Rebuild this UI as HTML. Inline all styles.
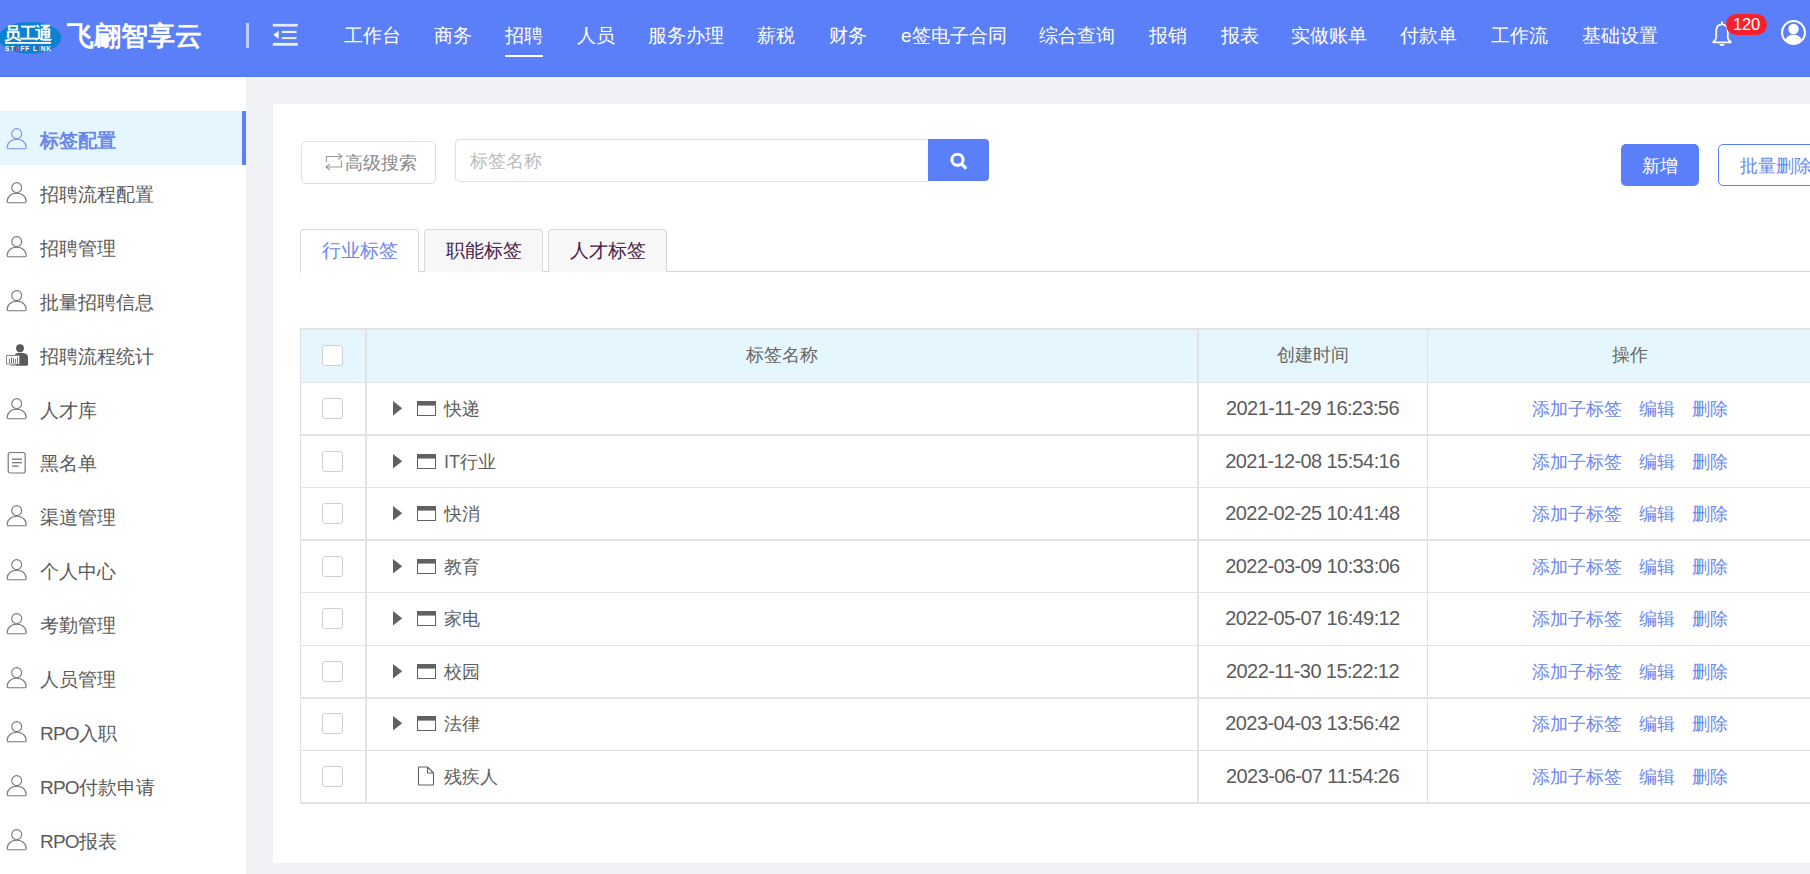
<!DOCTYPE html>
<html><head><meta charset="utf-8">
<style>
*{box-sizing:border-box;margin:0;padding:0}
html,body{width:1810px;height:874px;overflow:hidden;background:#f0f2f5;font-family:"Liberation Sans",sans-serif;}
.abs{position:absolute}
#hdr{position:absolute;left:0;top:0;width:1810px;height:77px;background:#5b7ff8;border-bottom:1px solid #5375f5}
.nav{position:absolute;top:25px;color:#fff;font-size:19px;line-height:22px;white-space:nowrap}
.nav.on:after{content:"";position:absolute;left:0;right:0;top:30px;height:2px;background:#fff}
#side{position:absolute;left:0;top:77px;width:246px;height:797px;background:#fff}
.si{position:absolute;left:0;width:246px;height:54px;color:#5a5a5a;font-size:19px}
.si .t{position:absolute;left:40px;top:19px;line-height:22px;white-space:nowrap}
.si svg{position:absolute;left:6px;top:17px}
.si.on{background:#e6f6fe;color:#6a87ec;font-weight:bold}
.si.on:after{content:"";position:absolute;right:0;top:0;width:4px;height:54px;background:#5b7ff8}
#panel{position:absolute;left:273px;top:104px;width:1537px;height:759px;background:#fff}
.btn{position:absolute;border-radius:4px;font-size:18px;text-align:center;white-space:nowrap}
.tab{position:absolute;top:229px;height:43px;border:1px solid #d9d9d9;border-bottom:none;border-radius:4px 4px 0 0;background:#f7f7f7;color:#45204a;font-size:19px;text-align:center;line-height:42px}
table{position:absolute;left:300px;top:328px;border-collapse:separate;border-spacing:0}
.row{position:absolute;left:300px;width:1510px}
.cell{position:absolute;top:0;height:100%}
.cb{position:absolute;left:22px;width:21px;height:21px;border:1px solid #cfcfcf;border-radius:3px;background:#fff}
.txt{color:#606060;font-size:18px;white-space:nowrap;line-height:22px}
.lnk{position:absolute;color:#6b87f0;font-size:18px;white-space:nowrap;line-height:22px}
</style></head>
<body>
<div id="hdr">
  <!-- logo -->
  <svg class="abs" style="left:0;top:0" width="70" height="76" viewBox="0 0 70 76">
    <ellipse cx="30" cy="37.8" rx="31.2" ry="15.9" fill="#0a82d2"/>
    <rect x="5" y="42" width="46" height="1.8" fill="#fff"/>
  </svg>
  <div class="abs" style="left:4px;top:24px;color:#fff;font-size:17px;font-weight:bold;line-height:20px;letter-spacing:-1.4px;white-space:nowrap">员工通</div>
  <div class="abs" style="left:5px;top:45px;color:#fff;font-size:6.5px;line-height:7px;letter-spacing:0.95px;font-weight:bold;white-space:nowrap">ST<span style="color:#f0405a">A</span>FF L<span style="color:#f0405a">I</span>NK</div>
  <div class="abs" style="left:67px;top:21px;color:#fff;font-size:27px;font-weight:bold;line-height:30px;white-space:nowrap">飞翩智享云</div>
  <div class="abs" style="left:246px;top:23px;width:3px;height:25px;background:rgba(255,255,255,0.6)"></div>
  <svg class="abs" style="left:272px;top:23px" width="26" height="24" viewBox="0 0 26 24">
    <rect x="0.8" y="0.9" width="25" height="2.7" fill="#e6ebfd"/>
    <rect x="9.8" y="7.9" width="14.7" height="2.1" fill="#eef1fd"/>
    <rect x="9.8" y="14" width="14.7" height="2.1" fill="#e6ebfd"/>
    <rect x="0.8" y="19.9" width="25" height="2.8" fill="#eef1fd"/>
    <path d="M6.6 7.8 L1.4 11.8 L6.6 15.8 Z" fill="#fff"/>
  </svg>
  <div class="nav" style="left:344px">工作台</div>
  <div class="nav" style="left:434px">商务</div>
  <div class="nav on" style="left:505px">招聘</div>
  <div class="nav" style="left:577px">人员</div>
  <div class="nav" style="left:648px">服务办理</div>
  <div class="nav" style="left:757px">薪税</div>
  <div class="nav" style="left:829px">财务</div>
  <div class="nav" style="left:901px">e签电子合同</div>
  <div class="nav" style="left:1039px">综合查询</div>
  <div class="nav" style="left:1149px">报销</div>
  <div class="nav" style="left:1221px">报表</div>
  <div class="nav" style="left:1291px">实做账单</div>
  <div class="nav" style="left:1400px">付款单</div>
  <div class="nav" style="left:1491px">工作流</div>
  <div class="nav" style="left:1582px">基础设置</div>
  <!-- bell -->
  <svg class="abs" style="left:1710px;top:20px" width="24" height="28" viewBox="0 0 24 28">
    <path d="M12 4.3 C7.8 4.3 6.2 7.8 6.2 11.5 L6.2 17.5 C6.2 19.5 4.5 21 3 22.3 L21 22.3 C19.5 21 17.8 19.5 17.8 17.5 L17.8 11.5 C17.8 7.8 16.2 4.3 12 4.3 Z" fill="none" stroke="#fff" stroke-width="1.7" stroke-linejoin="round"/>
    <rect x="11" y="1.5" width="2" height="2.5" fill="#fff"/>
    <path d="M9.5 24 L14.5 24 C14.5 25.5 13.5 26 12 26 C10.5 26 9.5 25.5 9.5 24 Z" fill="#fff"/>
  </svg>
  <div class="abs" style="left:1726px;top:14px;width:41px;height:21px;border-radius:10.5px;background:#f5222d;color:#fff;font-size:16.5px;line-height:20px;text-align:center;letter-spacing:-0.2px">120</div>
  <!-- user -->
  <svg class="abs" style="left:1779px;top:18px" width="30" height="30" viewBox="0 0 30 30">
    <circle cx="14.5" cy="14.5" r="11.5" fill="none" stroke="#fff" stroke-width="2"/>
    <circle cx="14.5" cy="11" r="5.2" fill="#fff"/>
    <path d="M6 22.5 C7.5 18 11 16.8 14.5 16.8 C18 16.8 21.5 18 23 22.5 C21 25 18 26 14.5 26 C11 26 8 25 6 22.5 Z" fill="#fff"/>
  </svg>
</div>

<div id="side">
<div class="si on" style="top:34px"><svg width="24" height="24" viewBox="0 0 24 24"><circle cx="10.7" cy="5.55" r="4.95" fill="none" stroke="#7b93ec" stroke-width="1.1"/><path d="M2.3 20.75 Q1.15 20.75 1.15 19.5 C1.15 14.5 5.3 11.2 10.7 11.2 C16.1 11.2 20.25 14.5 20.25 19.5 Q20.25 20.75 19.1 20.75 Z" fill="none" stroke="#7b93ec" stroke-width="1.1" stroke-linejoin="round"/></svg><span class="t">标签配置</span></div>
<div class="si" style="top:88px"><svg width="24" height="24" viewBox="0 0 24 24"><circle cx="10.7" cy="5.55" r="4.95" fill="none" stroke="#777" stroke-width="1.1"/><path d="M2.3 20.75 Q1.15 20.75 1.15 19.5 C1.15 14.5 5.3 11.2 10.7 11.2 C16.1 11.2 20.25 14.5 20.25 19.5 Q20.25 20.75 19.1 20.75 Z" fill="none" stroke="#777" stroke-width="1.1" stroke-linejoin="round"/></svg><span class="t">招聘流程配置</span></div>
<div class="si" style="top:142px"><svg width="24" height="24" viewBox="0 0 24 24"><circle cx="10.7" cy="5.55" r="4.95" fill="none" stroke="#777" stroke-width="1.1"/><path d="M2.3 20.75 Q1.15 20.75 1.15 19.5 C1.15 14.5 5.3 11.2 10.7 11.2 C16.1 11.2 20.25 14.5 20.25 19.5 Q20.25 20.75 19.1 20.75 Z" fill="none" stroke="#777" stroke-width="1.1" stroke-linejoin="round"/></svg><span class="t">招聘管理</span></div>
<div class="si" style="top:196px"><svg width="24" height="24" viewBox="0 0 24 24"><circle cx="10.7" cy="5.55" r="4.95" fill="none" stroke="#777" stroke-width="1.1"/><path d="M2.3 20.75 Q1.15 20.75 1.15 19.5 C1.15 14.5 5.3 11.2 10.7 11.2 C16.1 11.2 20.25 14.5 20.25 19.5 Q20.25 20.75 19.1 20.75 Z" fill="none" stroke="#777" stroke-width="1.1" stroke-linejoin="round"/></svg><span class="t">批量招聘信息</span></div>
<div class="si" style="top:250px"><svg width="26" height="24" viewBox="0 0 26 24"><circle cx="14" cy="4.2" r="3.9" fill="#5a5a5a"/><path d="M8.5 12 C8.5 9.6 11 8.8 14 8.8 C18 8.8 22 9.8 22 13.2 L22 20.6 C22 21.3 21.4 21.7 20.6 21.7 L9.5 21.7 Z" fill="#5a5a5a"/><rect x="0.5" y="11.5" width="13" height="8.5" fill="#fff" stroke="#8a8a8a" stroke-width="1"/><rect x="3" y="15" width="1" height="4" fill="#8a6fd0"/><rect x="5" y="13.5" width="1" height="5.5" fill="#c05070"/><rect x="7" y="14" width="1" height="5" fill="#5080d0"/><rect x="9" y="15" width="1" height="4" fill="#60a060"/><rect x="11" y="13.5" width="1" height="5.5" fill="#8a6fd0"/><rect x="4.5" y="20.5" width="5" height="1.2" fill="#8a8a8a"/></svg><span class="t">招聘流程统计</span></div>
<div class="si" style="top:304px"><svg width="24" height="24" viewBox="0 0 24 24"><circle cx="10.7" cy="5.55" r="4.95" fill="none" stroke="#777" stroke-width="1.1"/><path d="M2.3 20.75 Q1.15 20.75 1.15 19.5 C1.15 14.5 5.3 11.2 10.7 11.2 C16.1 11.2 20.25 14.5 20.25 19.5 Q20.25 20.75 19.1 20.75 Z" fill="none" stroke="#777" stroke-width="1.1" stroke-linejoin="round"/></svg><span class="t">人才库</span></div>
<div class="si" style="top:357px"><svg width="24" height="24" viewBox="0 0 24 24"><rect x="2.2" y="1.5" width="17" height="20.5" rx="2.2" fill="none" stroke="#777" stroke-width="1.2"/><rect x="6" y="7.5" width="10" height="1.3" fill="#777"/><rect x="6" y="11" width="10" height="1.3" fill="#777"/><rect x="6" y="14.5" width="6.5" height="1.3" fill="#777"/></svg><span class="t">黑名单</span></div>
<div class="si" style="top:411px"><svg width="24" height="24" viewBox="0 0 24 24"><circle cx="10.7" cy="5.55" r="4.95" fill="none" stroke="#777" stroke-width="1.1"/><path d="M2.3 20.75 Q1.15 20.75 1.15 19.5 C1.15 14.5 5.3 11.2 10.7 11.2 C16.1 11.2 20.25 14.5 20.25 19.5 Q20.25 20.75 19.1 20.75 Z" fill="none" stroke="#777" stroke-width="1.1" stroke-linejoin="round"/></svg><span class="t">渠道管理</span></div>
<div class="si" style="top:465px"><svg width="24" height="24" viewBox="0 0 24 24"><circle cx="10.7" cy="5.55" r="4.95" fill="none" stroke="#777" stroke-width="1.1"/><path d="M2.3 20.75 Q1.15 20.75 1.15 19.5 C1.15 14.5 5.3 11.2 10.7 11.2 C16.1 11.2 20.25 14.5 20.25 19.5 Q20.25 20.75 19.1 20.75 Z" fill="none" stroke="#777" stroke-width="1.1" stroke-linejoin="round"/></svg><span class="t">个人中心</span></div>
<div class="si" style="top:519px"><svg width="24" height="24" viewBox="0 0 24 24"><circle cx="10.7" cy="5.55" r="4.95" fill="none" stroke="#777" stroke-width="1.1"/><path d="M2.3 20.75 Q1.15 20.75 1.15 19.5 C1.15 14.5 5.3 11.2 10.7 11.2 C16.1 11.2 20.25 14.5 20.25 19.5 Q20.25 20.75 19.1 20.75 Z" fill="none" stroke="#777" stroke-width="1.1" stroke-linejoin="round"/></svg><span class="t">考勤管理</span></div>
<div class="si" style="top:573px"><svg width="24" height="24" viewBox="0 0 24 24"><circle cx="10.7" cy="5.55" r="4.95" fill="none" stroke="#777" stroke-width="1.1"/><path d="M2.3 20.75 Q1.15 20.75 1.15 19.5 C1.15 14.5 5.3 11.2 10.7 11.2 C16.1 11.2 20.25 14.5 20.25 19.5 Q20.25 20.75 19.1 20.75 Z" fill="none" stroke="#777" stroke-width="1.1" stroke-linejoin="round"/></svg><span class="t">人员管理</span></div>
<div class="si" style="top:627px"><svg width="24" height="24" viewBox="0 0 24 24"><circle cx="10.7" cy="5.55" r="4.95" fill="none" stroke="#777" stroke-width="1.1"/><path d="M2.3 20.75 Q1.15 20.75 1.15 19.5 C1.15 14.5 5.3 11.2 10.7 11.2 C16.1 11.2 20.25 14.5 20.25 19.5 Q20.25 20.75 19.1 20.75 Z" fill="none" stroke="#777" stroke-width="1.1" stroke-linejoin="round"/></svg><span class="t"><span style="letter-spacing:-0.8px">RPO</span>入职</span></div>
<div class="si" style="top:681px"><svg width="24" height="24" viewBox="0 0 24 24"><circle cx="10.7" cy="5.55" r="4.95" fill="none" stroke="#777" stroke-width="1.1"/><path d="M2.3 20.75 Q1.15 20.75 1.15 19.5 C1.15 14.5 5.3 11.2 10.7 11.2 C16.1 11.2 20.25 14.5 20.25 19.5 Q20.25 20.75 19.1 20.75 Z" fill="none" stroke="#777" stroke-width="1.1" stroke-linejoin="round"/></svg><span class="t"><span style="letter-spacing:-0.8px">RPO</span>付款申请</span></div>
<div class="si" style="top:735px"><svg width="24" height="24" viewBox="0 0 24 24"><circle cx="10.7" cy="5.55" r="4.95" fill="none" stroke="#777" stroke-width="1.1"/><path d="M2.3 20.75 Q1.15 20.75 1.15 19.5 C1.15 14.5 5.3 11.2 10.7 11.2 C16.1 11.2 20.25 14.5 20.25 19.5 Q20.25 20.75 19.1 20.75 Z" fill="none" stroke="#777" stroke-width="1.1" stroke-linejoin="round"/></svg><span class="t"><span style="letter-spacing:-0.8px">RPO</span>报表</span></div>

</div>

<div id="panel"></div>

<div class="abs" style="left:301px;top:141px;width:135px;height:43px;border:1px solid #dcdfe6;border-radius:5px"></div>
<svg class="abs" style="left:324px;top:152px" width="20" height="20" viewBox="0 0 20 20"><path d="M2.5 10 V4.5 H18 M14 1.5 L18 4.5 L14 7.5 M17.5 8.5 V15 H2 M6 12 L2 15 L6 18" fill="none" stroke="#9a9a9a" stroke-width="1.1"/></svg>
<div class="abs" style="left:345px;top:152px;color:#888;font-size:18px;line-height:22px">高级搜索</div>
<div class="abs" style="left:455px;top:139px;width:474px;height:43px;border:1px solid #dcdfe6;border-radius:4px 0 0 4px"></div>
<div class="abs" style="left:470px;top:150px;color:#bbb;font-size:18px;line-height:22px">标签名称</div>
<div class="abs" style="left:928px;top:139px;width:61px;height:42px;background:#5b7ff8;border-radius:0 4px 4px 0"></div>
<svg class="abs" style="left:948px;top:150px" width="20" height="20" viewBox="0 0 20 20"><circle cx="9.5" cy="9.8" r="5.6" fill="none" stroke="#fff" stroke-width="3.1"/><path d="M13.8 14.1 L17.3 17.6" stroke="#fff" stroke-width="3" stroke-linecap="round"/></svg>
<div class="btn" style="left:1621px;top:144px;width:78px;height:42px;background:#5b7ff8;color:#fff;line-height:44px;border-radius:5px">新增</div>
<div class="btn" style="left:1718px;top:144px;width:120px;height:42px;border:1px solid #5b7ff8;color:#6b87f0;line-height:42px;text-align:left;padding-left:21px;border-radius:5px">批量删除</div>
<div class="abs" style="left:300px;top:271px;width:1510px;height:1px;background:#d5d5d5"></div>
<div class="tab" style="left:300px;width:119px;background:#fff;color:#6b87f0;height:44px">行业标签</div>
<div class="tab" style="left:424px;width:119px">职能标签</div>
<div class="tab" style="left:548px;width:119px">人才标签</div>
<div class="abs" style="left:300px;top:328px;width:1510px;height:54px;background:#e6f6fe"></div>
<div class="cb" style="left:322px;top:345px"></div>
<div class="abs txt" style="left:366px;width:832px;top:344px;text-align:center;color:#666;font-size:18px">标签名称</div>
<div class="abs txt" style="left:1198px;width:229px;top:344px;text-align:center;color:#666;font-size:18px">创建时间</div>
<div class="abs txt" style="left:1427px;width:406px;top:344px;text-align:center;color:#666;font-size:18px">操作</div>
<div class="cb" style="left:322px;top:398px"></div>
<svg class="abs" style="left:393px;top:401px" width="10" height="15" viewBox="0 0 10 15"><path d="M0 0 L9.2 7.3 L0 14.6 Z" fill="#616161"/></svg>
<svg class="abs" style="left:417px;top:401px" width="19" height="15" viewBox="0 0 19 15"><rect x="0.5" y="0.5" width="18" height="14" fill="none" stroke="#616161" stroke-width="1"/><rect x="0" y="0" width="19" height="4.6" fill="#616161"/></svg>
<div class="abs txt" style="left:444px;top:398px">快递</div>
<div class="abs txt" style="left:1198px;width:229px;top:398px;text-align:center;color:#5c5c5c;font-size:20px;letter-spacing:-0.6px;margin-top:-1px">2021-11-29 16:23:56</div>
<div class="lnk" style="left:1532px;top:398px">添加子标签</div>
<div class="lnk" style="left:1639px;top:398px">编辑</div>
<div class="lnk" style="left:1692px;top:398px">删除</div>
<div class="cb" style="left:322px;top:451px"></div>
<svg class="abs" style="left:393px;top:454px" width="10" height="15" viewBox="0 0 10 15"><path d="M0 0 L9.2 7.3 L0 14.6 Z" fill="#616161"/></svg>
<svg class="abs" style="left:417px;top:454px" width="19" height="15" viewBox="0 0 19 15"><rect x="0.5" y="0.5" width="18" height="14" fill="none" stroke="#616161" stroke-width="1"/><rect x="0" y="0" width="19" height="4.6" fill="#616161"/></svg>
<div class="abs txt" style="left:444px;top:451px">IT行业</div>
<div class="abs txt" style="left:1198px;width:229px;top:451px;text-align:center;color:#5c5c5c;font-size:20px;letter-spacing:-0.6px;margin-top:-1px">2021-12-08 15:54:16</div>
<div class="lnk" style="left:1532px;top:451px">添加子标签</div>
<div class="lnk" style="left:1639px;top:451px">编辑</div>
<div class="lnk" style="left:1692px;top:451px">删除</div>
<div class="cb" style="left:322px;top:503px"></div>
<svg class="abs" style="left:393px;top:506px" width="10" height="15" viewBox="0 0 10 15"><path d="M0 0 L9.2 7.3 L0 14.6 Z" fill="#616161"/></svg>
<svg class="abs" style="left:417px;top:506px" width="19" height="15" viewBox="0 0 19 15"><rect x="0.5" y="0.5" width="18" height="14" fill="none" stroke="#616161" stroke-width="1"/><rect x="0" y="0" width="19" height="4.6" fill="#616161"/></svg>
<div class="abs txt" style="left:444px;top:503px">快消</div>
<div class="abs txt" style="left:1198px;width:229px;top:503px;text-align:center;color:#5c5c5c;font-size:20px;letter-spacing:-0.6px;margin-top:-1px">2022-02-25 10:41:48</div>
<div class="lnk" style="left:1532px;top:503px">添加子标签</div>
<div class="lnk" style="left:1639px;top:503px">编辑</div>
<div class="lnk" style="left:1692px;top:503px">删除</div>
<div class="cb" style="left:322px;top:556px"></div>
<svg class="abs" style="left:393px;top:559px" width="10" height="15" viewBox="0 0 10 15"><path d="M0 0 L9.2 7.3 L0 14.6 Z" fill="#616161"/></svg>
<svg class="abs" style="left:417px;top:559px" width="19" height="15" viewBox="0 0 19 15"><rect x="0.5" y="0.5" width="18" height="14" fill="none" stroke="#616161" stroke-width="1"/><rect x="0" y="0" width="19" height="4.6" fill="#616161"/></svg>
<div class="abs txt" style="left:444px;top:556px">教育</div>
<div class="abs txt" style="left:1198px;width:229px;top:556px;text-align:center;color:#5c5c5c;font-size:20px;letter-spacing:-0.6px;margin-top:-1px">2022-03-09 10:33:06</div>
<div class="lnk" style="left:1532px;top:556px">添加子标签</div>
<div class="lnk" style="left:1639px;top:556px">编辑</div>
<div class="lnk" style="left:1692px;top:556px">删除</div>
<div class="cb" style="left:322px;top:608px"></div>
<svg class="abs" style="left:393px;top:611px" width="10" height="15" viewBox="0 0 10 15"><path d="M0 0 L9.2 7.3 L0 14.6 Z" fill="#616161"/></svg>
<svg class="abs" style="left:417px;top:611px" width="19" height="15" viewBox="0 0 19 15"><rect x="0.5" y="0.5" width="18" height="14" fill="none" stroke="#616161" stroke-width="1"/><rect x="0" y="0" width="19" height="4.6" fill="#616161"/></svg>
<div class="abs txt" style="left:444px;top:608px">家电</div>
<div class="abs txt" style="left:1198px;width:229px;top:608px;text-align:center;color:#5c5c5c;font-size:20px;letter-spacing:-0.6px;margin-top:-1px">2022-05-07 16:49:12</div>
<div class="lnk" style="left:1532px;top:608px">添加子标签</div>
<div class="lnk" style="left:1639px;top:608px">编辑</div>
<div class="lnk" style="left:1692px;top:608px">删除</div>
<div class="cb" style="left:322px;top:661px"></div>
<svg class="abs" style="left:393px;top:664px" width="10" height="15" viewBox="0 0 10 15"><path d="M0 0 L9.2 7.3 L0 14.6 Z" fill="#616161"/></svg>
<svg class="abs" style="left:417px;top:664px" width="19" height="15" viewBox="0 0 19 15"><rect x="0.5" y="0.5" width="18" height="14" fill="none" stroke="#616161" stroke-width="1"/><rect x="0" y="0" width="19" height="4.6" fill="#616161"/></svg>
<div class="abs txt" style="left:444px;top:661px">校园</div>
<div class="abs txt" style="left:1198px;width:229px;top:661px;text-align:center;color:#5c5c5c;font-size:20px;letter-spacing:-0.6px;margin-top:-1px">2022-11-30 15:22:12</div>
<div class="lnk" style="left:1532px;top:661px">添加子标签</div>
<div class="lnk" style="left:1639px;top:661px">编辑</div>
<div class="lnk" style="left:1692px;top:661px">删除</div>
<div class="cb" style="left:322px;top:713px"></div>
<svg class="abs" style="left:393px;top:716px" width="10" height="15" viewBox="0 0 10 15"><path d="M0 0 L9.2 7.3 L0 14.6 Z" fill="#616161"/></svg>
<svg class="abs" style="left:417px;top:716px" width="19" height="15" viewBox="0 0 19 15"><rect x="0.5" y="0.5" width="18" height="14" fill="none" stroke="#616161" stroke-width="1"/><rect x="0" y="0" width="19" height="4.6" fill="#616161"/></svg>
<div class="abs txt" style="left:444px;top:713px">法律</div>
<div class="abs txt" style="left:1198px;width:229px;top:713px;text-align:center;color:#5c5c5c;font-size:20px;letter-spacing:-0.6px;margin-top:-1px">2023-04-03 13:56:42</div>
<div class="lnk" style="left:1532px;top:713px">添加子标签</div>
<div class="lnk" style="left:1639px;top:713px">编辑</div>
<div class="lnk" style="left:1692px;top:713px">删除</div>
<div class="cb" style="left:322px;top:766px"></div>
<svg class="abs" style="left:417px;top:766px" width="18" height="20" viewBox="0 0 18 20"><path d="M1.5 1 L10.5 1 L16.5 7 L16.5 18.5 Q16.5 19 16 19 L2 19 Q1.5 19 1.5 18.5 Z M10.5 1 L10.5 7 L16.5 7" fill="none" stroke="#616161" stroke-width="1.1" stroke-linejoin="round"/></svg>
<div class="abs txt" style="left:444px;top:766px">残疾人</div>
<div class="abs txt" style="left:1198px;width:229px;top:766px;text-align:center;color:#5c5c5c;font-size:20px;letter-spacing:-0.6px;margin-top:-1px">2023-06-07 11:54:26</div>
<div class="lnk" style="left:1532px;top:766px">添加子标签</div>
<div class="lnk" style="left:1639px;top:766px">编辑</div>
<div class="lnk" style="left:1692px;top:766px">删除</div>
<div class="abs" style="left:300px;top:328px;width:1510px;height:2px;background:#e2e2e2"></div>
<div class="abs" style="left:300px;top:382px;width:1510px;height:1px;background:#e2e2e2"></div>
<div class="abs" style="left:300px;top:434px;width:1510px;height:2px;background:#e2e2e2"></div>
<div class="abs" style="left:300px;top:487px;width:1510px;height:1px;background:#e2e2e2"></div>
<div class="abs" style="left:300px;top:539px;width:1510px;height:2px;background:#e2e2e2"></div>
<div class="abs" style="left:300px;top:592px;width:1510px;height:1px;background:#e2e2e2"></div>
<div class="abs" style="left:300px;top:645px;width:1510px;height:1px;background:#e2e2e2"></div>
<div class="abs" style="left:300px;top:697px;width:1510px;height:2px;background:#e2e2e2"></div>
<div class="abs" style="left:300px;top:750px;width:1510px;height:1px;background:#e2e2e2"></div>
<div class="abs" style="left:300px;top:802px;width:1510px;height:2px;background:#e2e2e2"></div>
<div class="abs" style="left:300px;top:328px;width:1px;height:476px;background:#e2e2e2"></div>
<div class="abs" style="left:365px;top:328px;width:2px;height:476px;background:#e2e2e2"></div>
<div class="abs" style="left:1197px;top:328px;width:2px;height:476px;background:#e2e2e2"></div>
<div class="abs" style="left:1427px;top:328px;width:1px;height:476px;background:#e2e2e2"></div>


</body></html>
